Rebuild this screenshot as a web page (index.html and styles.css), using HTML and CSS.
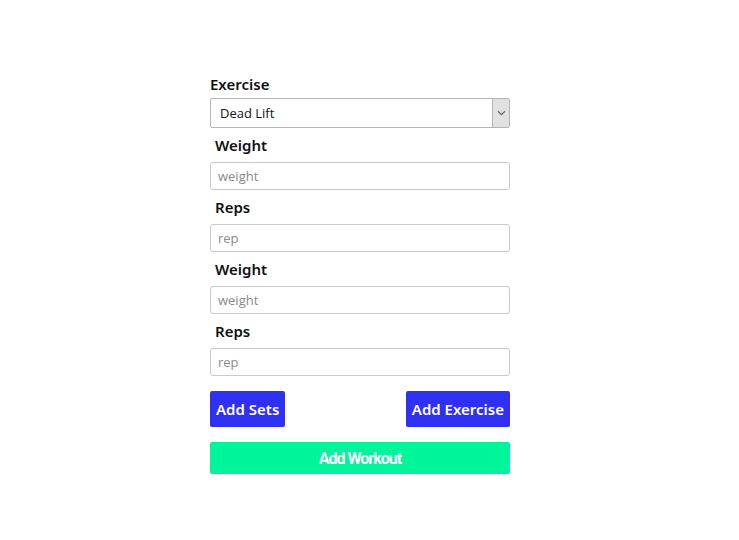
FILE: index.html
```html
<!DOCTYPE html>
<html>
<head>
<meta charset="utf-8">
<link rel="stylesheet" href="styles.css">
</head>
<body>
<form class="workout-form">
  <label class="label label-main">Exercise</label>
  <div class="select-wrap">
    <select class="select">
      <option>Dead Lift</option>
    </select>
    <span class="select-arrow">
      <svg width="9" height="6" viewBox="0 0 9 6"><path d="M1 1.2 L4.5 4.6 L8 1.2" fill="none" stroke="#666" stroke-width="1.2"/></svg>
    </span>
  </div>
  <label class="label">Weight</label>
  <input class="input" type="text" placeholder="weight">
  <label class="label">Reps</label>
  <input class="input" type="text" placeholder="rep">
  <label class="label">Weight</label>
  <input class="input" type="text" placeholder="weight">
  <label class="label">Reps</label>
  <input class="input" type="text" placeholder="rep">
  <div class="button-row">
    <button type="button" class="btn btn-blue">Add Sets</button>
    <button type="button" class="btn btn-blue">Add Exercise</button>
  </div>
  <button type="button" class="btn btn-green">Add Workout</button>
</form>
</body>
</html>
```
FILE: styles.css
```css
html, body {
  margin: 0;
  padding: 0;
  background: #fff;
}
body {
  padding-top: 74px;
  font-family: "Open Sans", "Noto Sans", sans-serif;
}
.workout-form {
  width: 300px;
  margin-left: 210px;
  display: flex;
  flex-direction: column;
}
.label {
  font-family: "Noto Sans", sans-serif;
  font-weight: 600;
  font-size: 15px;
  line-height: 20px;
  color: #111;
  padding: 7px 0 7px 5px;
}
.label-main {
  padding: 0 0 4px 0;
}
.select-wrap {
  position: relative;
  height: 30px;
}
.select {
  appearance: none;
  -webkit-appearance: none;
  width: 100%;
  height: 30px;
  box-sizing: border-box;
  border: 1px solid #b4b4b4;
  border-radius: 2px;
  background: #fff;
  font-family: "Open Sans", sans-serif;
  font-size: 13px;
  color: #111;
  padding: 0 0 0 9px;
  margin: 0;
}
.select-arrow {
  position: absolute;
  right: 1px;
  top: 1px;
  width: 17px;
  height: 28px;
  box-sizing: border-box;
  background: #e1e1e1;
  border-left: 1px solid #b4b4b4;
  display: flex;
  align-items: center;
  justify-content: center;
}
.input {
  height: 28px;
  box-sizing: border-box;
  border: 1px solid #c9c9c9;
  border-radius: 3px;
  padding: 0 7px;
  font-family: "Open Sans", sans-serif;
  font-size: 13px;
  margin: 0;
}
.input::placeholder {
  color: #8a8a8a;
}
.button-row {
  display: flex;
  justify-content: space-between;
  margin-top: 15px;
}
.btn {
  border: none;
  border-radius: 2px;
  color: #fff;
  font-family: "Noto Sans", sans-serif;
  font-weight: 600;
  cursor: pointer;
}
.btn-blue {
  background: #3030f2;
  height: 36px;
  font-size: 15px;
  padding: 0 6px;
}
.btn-green {
  background: #00f59a;
  height: 32px;
  margin-top: 15px;
  font-family: "Liberation Sans Narrow", "Roboto", sans-serif;
  font-weight: 700;
  font-size: 16px;
  letter-spacing: -1px;
}
```
